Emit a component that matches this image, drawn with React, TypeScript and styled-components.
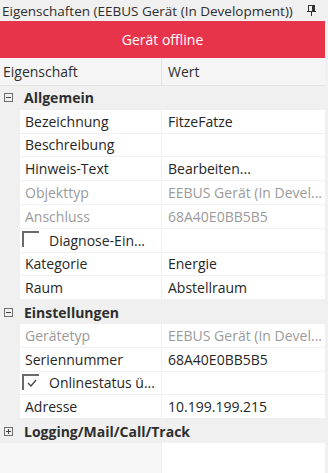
import React from "react";
import styled, { createGlobalStyle } from "styled-components";

const Global = createGlobalStyle`
  html, body { margin: 0; padding: 0; background: #f0f0f0; }
  body { font-family: "Open Sans", "Noto Sans", sans-serif; }
`;

const Panel = styled.div`
  width: 328px;
  height: 473px;
  background: #f0f0f0;
  display: flex;
  flex-direction: column;
  overflow: hidden;
`;

const TitleBar = styled.div`
  height: 21px;
  display: flex;
  align-items: center;
  justify-content: space-between;
  padding: 0 12px 0 2px;
  font-size: 13.5px;
  color: #2e2e2e;
  white-space: nowrap;
`;

const Body = styled.div`
  width: 325px;
  display: flex;
  flex-direction: column;
  flex: 1;
`;

const Banner = styled.div`
  height: 37px;
  background: #e8344a;
  color: #fff;
  font-size: 14px;
  display: flex;
  align-items: center;
  justify-content: center;
`;

const Grid = styled.div`
  display: flex;
  flex-direction: column;
  flex: 1;
  background: #f0f0f0;
`;

const HeaderRow = styled.div`
  height: 27px;
  display: grid;
  grid-template-columns: 161px 1fr;
  background: #f5f5f5;
  border-bottom: 1px solid #e3e3e3;
  font-size: 14px;
  color: #2e2e2e;
`;

const HeaderCell = styled.div<{ $first?: boolean }>`
  display: flex;
  align-items: center;
  padding-left: ${(p) => (p.$first ? "3px" : "6px")};
  border-left: ${(p) => (p.$first ? "none" : "1px solid #e3e3e3")};
`;

const CategoryRow = styled.div`
  height: 23.8px;
  display: flex;
  align-items: center;
  font-size: 14px;
  font-weight: 700;
  color: #2e2e2e;
  background: #f0f0f0;
`;

const Expander = styled.span`
  width: 9px;
  height: 9px;
  box-sizing: border-box;
  border: 1px solid #6e6e6e;
  margin: 0 11px 0 4px;
  position: relative;
  &::before {
    content: "";
    position: absolute;
    left: 1px;
    right: 1px;
    top: 3px;
    height: 1px;
    background: #444;
  }
`;

const ExpanderPlus = styled(Expander)`
  &::after {
    content: "";
    position: absolute;
    top: 1px;
    bottom: 1px;
    left: 3px;
    width: 1px;
    background: #444;
  }
`;

const PropRow = styled.div`
  height: 23.8px;
  box-sizing: border-box;
  display: grid;
  grid-template-columns: 20px 141px 1fr;
  border-bottom: 1px solid #f0f0f0;
  font-size: 14px;
`;

const Gutter = styled.div`
  background: #f0f0f0;
`;

const NameCell = styled.div<{ $dim?: boolean }>`
  background: #fff;
  display: flex;
  align-items: center;
  padding-left: 5px;
  color: ${(p) => (p.$dim ? "#9a9a9a" : "#262626")};
  white-space: nowrap;
  overflow: hidden;
`;

const ValueCell = styled.div<{ $dim?: boolean }>`
  background: #fff;
  border-left: 1px solid #f0f0f0;
  display: flex;
  align-items: center;
  padding-left: 6px;
  color: ${(p) => (p.$dim ? "#9a9a9a" : "#262626")};
  white-space: nowrap;
  overflow: hidden;
`;

const CheckBox = styled.span`
  width: 17px;
  height: 16px;
  box-sizing: border-box;
  border-top: 2px solid #6a6a6a;
  border-left: 2px solid #6a6a6a;
  margin: 2px 10px 0 -3px;
  display: flex;
  align-items: center;
  justify-content: center;
  align-self: flex-start;
`;

const Filler = styled.div`
  flex: 1;
  display: grid;
  grid-template-columns: 161px 1fr;
`;

const FillerLeft = styled.div`
  background: #f7f7f7;
`;

const FillerRight = styled.div`
  background: #fff;
  border-left: 1px solid #f0f0f0;
`;

const Pin = () => (
  <svg width="9" height="11" viewBox="0 0 9 11">
    <rect x="1.5" y="0.5" width="6" height="6" fill="none" stroke="#333" />
    <rect x="5" y="1" width="2" height="5" fill="#333" />
    <rect x="0" y="6" width="9" height="1" fill="#333" />
    <rect x="4" y="7" width="1" height="4" fill="#333" />
  </svg>
);

const Check = () => (
  <svg width="10" height="8" viewBox="0 0 10 8">
    <path d="M1 4 L4 7 L9 1" fill="none" stroke="#444" strokeWidth="1.3" />
  </svg>
);

type Prop = { name: string; value?: string; dim?: boolean; check?: "on" | "off" };

const Row = ({ p }: { p: Prop }) => (
  <PropRow>
    <Gutter />
    <NameCell $dim={p.dim}>
      {p.check && <CheckBox>{p.check === "on" && <Check />}</CheckBox>}
      {p.name}
    </NameCell>
    <ValueCell $dim={p.dim}>{p.value}</ValueCell>
  </PropRow>
);

const allgemein: Prop[] = [
  { name: "Bezeichnung", value: "FitzeFatze" },
  { name: "Beschreibung", value: "" },
  { name: "Hinweis-Text", value: "Bearbeiten..." },
  { name: "Objekttyp", value: "EEBUS Gerät (In Devel...", dim: true },
  { name: "Anschluss", value: "68A40E0BB5B5", dim: true },
  { name: "Diagnose-Ein...", value: "", check: "off" },
  { name: "Kategorie", value: "Energie" },
  { name: "Raum", value: "Abstellraum" },
];

const einstellungen: Prop[] = [
  { name: "Gerätetyp", value: "EEBUS Gerät (In Devel...", dim: true },
  { name: "Seriennummer", value: "68A40E0BB5B5" },
  { name: "Onlinestatus ü...", value: "", check: "on" },
  { name: "Adresse", value: "10.199.199.215" },
];

export default function App() {
  return (
    <Panel>
      <Global />
      <TitleBar>
        <span>Eigenschaften (EEBUS Gerät (In Development))</span>
        <Pin />
      </TitleBar>
      <Body>
        <Banner>Gerät offline</Banner>
        <Grid>
          <HeaderRow>
            <HeaderCell $first>Eigenschaft</HeaderCell>
            <HeaderCell>Wert</HeaderCell>
          </HeaderRow>
          <CategoryRow>
            <Expander />
            Allgemein
          </CategoryRow>
          {allgemein.map((p) => (
            <Row key={p.name} p={p} />
          ))}
          <CategoryRow>
            <Expander />
            Einstellungen
          </CategoryRow>
          {einstellungen.map((p) => (
            <Row key={p.name} p={p} />
          ))}
          <CategoryRow>
            <ExpanderPlus />
            Logging/Mail/Call/Track
          </CategoryRow>
          <Filler>
            <FillerLeft />
            <FillerRight />
          </Filler>
        </Grid>
      </Body>
    </Panel>
  );
}
